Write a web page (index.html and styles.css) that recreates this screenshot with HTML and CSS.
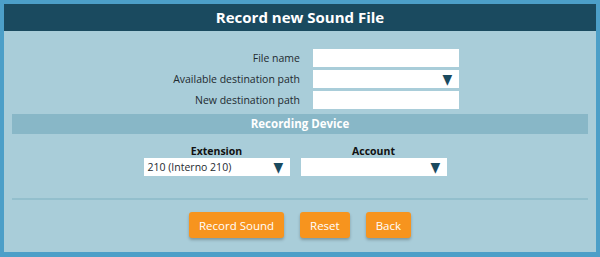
FILE: index.html
```html
<!DOCTYPE html>
<html lang="en">
<head>
  <meta charset="UTF-8" />
  <title>Record new Sound File</title>
  <link rel="stylesheet" href="styles.css">
</head>
<body>

<div class="panel">
  <h2 class="panel-title">Record new Sound File</h2>
  <div class="panel-body">
    <div class="form-rows">
      <div class="form-row">
        <label for="fileName">File name</label>
        <input type="text" id="fileName">
      </div>
      <div class="form-row">
        <label for="destPath">Available destination path</label>
        <div class="select-box" id="destPath"><span></span><span class="arrow">&#9660;</span></div>
      </div>
      <div class="form-row">
        <label for="newPath">New destination path</label>
        <input type="text" id="newPath">
      </div>
    </div>

    <div class="section-bar">Recording Device</div>

    <div class="device-cols">
      <div class="device-col">
        <label>Extension</label>
        <div class="select-box"><span>210 (Interno 210)</span><span class="arrow">&#9660;</span></div>
      </div>
      <div class="device-col">
        <label>Account</label>
        <div class="select-box"><span></span><span class="arrow">&#9660;</span></div>
      </div>
    </div>

    <hr class="divider">

    <div class="actions">
      <button>Record Sound</button>
      <button>Reset</button>
      <button>Back</button>
    </div>
  </div>
</div>

</body>
</html>
```

FILE: styles.css
```css
:root {
  --outer-blue: #4c9fc8;
  --header-dark: #1a4a5f;
  --panel-bg: #a9cdd9;
  --bar-bg: #88b7c7;
  --orange: #f7941e;
  --text-color: #1e2a30;
}

* {
  box-sizing: border-box;
  margin: 0;
  padding: 0;
}

body {
  font-family: 'Open Sans', 'DejaVu Sans', sans-serif;
  background: var(--outer-blue);
  width: 600px;
  height: 257px;
  padding: 4px 4px 5px 4px;
  overflow: hidden;
}

.panel {
  background: var(--panel-bg);
  height: 248px;
}

.panel-title {
  background: var(--header-dark);
  color: #fff;
  font-size: 15px;
  font-weight: 700;
  text-align: center;
  height: 27px;
  line-height: 27px;
}

.panel-body {
  padding: 18px 8px 0 8px;
}

.form-rows {
  display: flex;
  flex-direction: column;
  gap: 3px;
}

.form-row {
  display: flex;
  align-items: center;
  height: 18px;
}

.form-row label {
  width: 301px;
  text-align: right;
  padding-right: 13px;
  font-size: 10.5px;
  color: var(--text-color);
}

input,
.select-box {
  width: 146px;
  height: 18px;
  border: none;
  background: #fff;
  font-family: inherit;
  font-size: 10.5px;
}

.select-box {
  display: flex;
  justify-content: space-between;
  align-items: center;
  padding: 0 6px 0 4px;
  color: var(--text-color);
}

.arrow {
  color: #1a4a5f;
  font-size: 14px;
  line-height: 14px;
  transform: scaleX(0.9);
}

.section-bar {
  margin-top: 5px;
  background: var(--bar-bg);
  color: #fff;
  font-size: 11.5px;
  font-weight: 700;
  text-align: center;
  height: 20px;
  line-height: 20px;
}

.device-cols {
  display: flex;
  justify-content: center;
  gap: 11px;
  margin-top: 10px;
  padding-right: 10px;
}

.device-col {
  display: flex;
  flex-direction: column;
  align-items: center;
}

.device-col label {
  font-size: 10.5px;
  font-weight: 700;
  color: #111;
  line-height: 14px;
}

.divider {
  border: none;
  border-top: 2px solid #93bfcd;
  margin-top: 22px;
}

.actions {
  display: flex;
  justify-content: center;
  gap: 16px;
  margin-top: 12px;
}

button {
  background: var(--orange);
  color: #fff;
  border: none;
  border-radius: 3px;
  font-family: inherit;
  font-size: 11.5px;
  height: 26px;
  padding: 0 10px;
  box-shadow: 0 2px 3px rgba(0, 0, 0, 0.25);
  cursor: pointer;
}
```
